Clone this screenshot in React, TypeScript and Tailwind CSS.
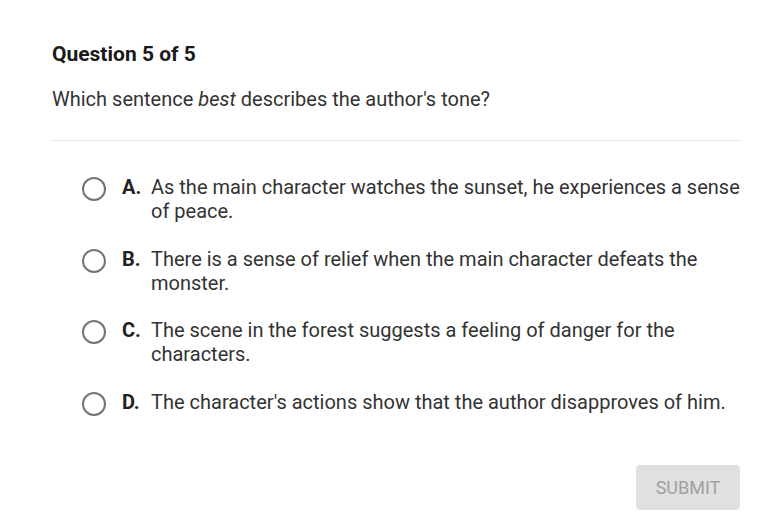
const options = [
  { letter: "A.", text: "As the main character watches the sunset, he experiences a sense of peace." },
  { letter: "B.", text: "There is a sense of relief when the main character defeats the monster." },
  { letter: "C.", text: "The scene in the forest suggests a feeling of danger for the characters." },
  { letter: "D.", text: "The character's actions show that the author disapproves of him." },
];

export default function App() {
  return (
    <div className="min-h-[527px] w-[783px] bg-white font-['Roboto',sans-serif] text-[#333]">
      <div className="w-[688px] pl-[52px] pt-[40px] box-content">
        <h1 className="text-[21px] font-bold leading-[28px] text-[#1a1a1a]">Question 5 of 5</h1>
        <p className="mt-[19px] text-[20px] leading-[24px]">
          Which sentence <em>best</em> describes the author's tone?
        </p>
        <div className="mt-[29px] h-px bg-[#e6e6e6]" />

        <ul className="mt-[34px] flex flex-col gap-[23.5px] pl-[30px]">
          {options.map((o) => (
            <li key={o.letter} className="flex items-start">
              <span className="mt-[2px] h-[24px] w-[24px] shrink-0 rounded-full border-2 border-[#747474]" />
              <span className="ml-[16px] w-[29px] shrink-0 text-[20px] font-bold leading-[24px] text-[#222]">
                {o.letter}
              </span>
              <span className="text-[20px] leading-[24px]">{o.text}</span>
            </li>
          ))}
        </ul>

        <div className="mt-[49px] flex justify-end">
          <button className="h-[45px] w-[104px] rounded-[4px] bg-[#e0e0e0] text-[18px] text-[#a0a0a0]">
            SUBMIT
          </button>
        </div>
      </div>
    </div>
  );
}
